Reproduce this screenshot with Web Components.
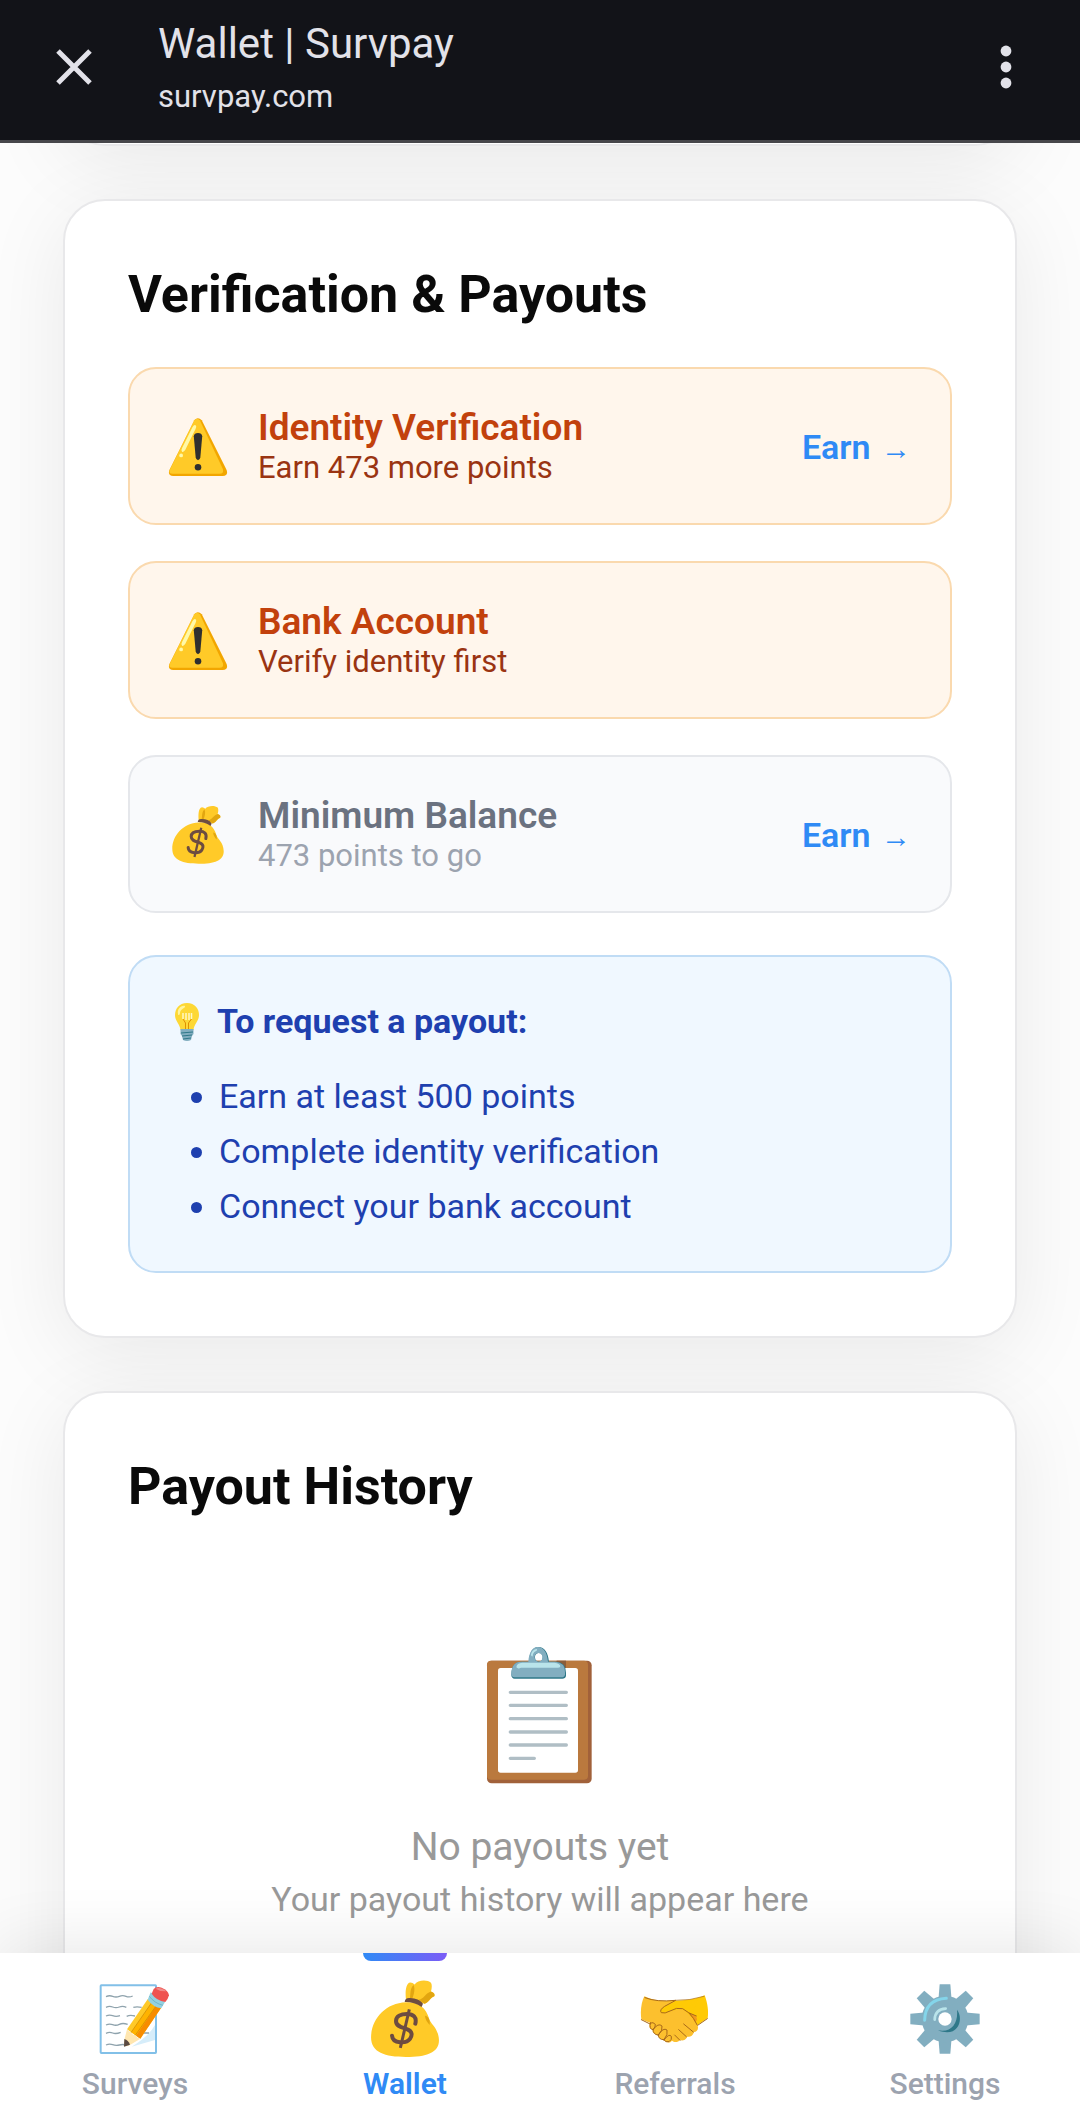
<!DOCTYPE html>
<html lang="en">
<head>
<meta charset="utf-8">
<meta name="viewport" content="width=device-width, initial-scale=1">
<title>Wallet | Survpay</title>
<style>
  body {
    margin: 0;
    background: #fcfcfc;
    color: #0a0a0a;
    font-family: Roboto, "Liberation Sans", sans-serif;
  }
</style>
</head>
<body>
<wallet-page></wallet-page>

<script>
/** Create an HTML template element from a string template. */
const html = (strings, ...expressions) => {
  const template = document.createElement('template')
  template.innerHTML = strings.reduce((result, str, i) => result + str + (expressions[i] ?? ''), '')
  return template
}

/** Base class: clones the static template into an open shadow root. */
class Component extends HTMLElement {
  constructor() {
    super()
    this.attachShadow({ mode: 'open' })
    this.shadowRoot.appendChild(this.constructor.template.content.cloneNode(true))
  }
}

const gearTooth = 'M236 163h32l4 50h-40z'

/** Drawings by name: viewBox, then markup. */
const icons = {
  close: ['0 0 36 36', `
    <path d="M2 2L34 34M34 2L2 34" stroke="currentColor" stroke-width="5"/>`],

  more: ['0 0 12 44', `
    <g fill="currentColor"><circle cx="6" cy="6" r="5.4"/><circle cx="6" cy="22" r="5.4"/><circle cx="6" cy="38" r="5.4"/></g>`],

  warning: ['0 0 128 128', `
    <path fill="#f2a600" d="M57 6Q64-1 72 7L125 113Q129 125 117 126H11Q-1 125 3 113Z"/>
    <path fill="#ffca28" d="M56 7Q62 0 68 7L117 111Q120 121 110 121H10Q0 121 4 112Z"/>
    <path fill="#fff9a8" d="M52 22Q57 14 60 19Q61 22 56 31L37 70Q33 76 30 74Q27 71 30 66Z"/>
    <circle cx="28" cy="82" r="4" fill="#fff9a8"/>
    <path fill="#2f2f2f" d="M55 41Q56 34 64 34Q72 34 73 41L69 86Q68 92 64 92Q60 92 59 86Z"/>
    <circle cx="64" cy="107" r="7" fill="#2f2f2f"/>`],

  money: ['106 148 238 238', `
    <path fill="#ffca28" d="M228 208C226 195 225 158 241 157Q248 157 254 163C262 150 292 148 303 158Q308 166 303 184Q317 189 313 199C300 205 298 217 284 221Z"/>
    <path fill="#e2a610" d="M240 204C242 190 240 174 251 165C256 178 252 192 247 206ZM266 209C284 205 284 190 303 184Q317 189 313 199C298 204 298 217 284 221Z"/>
    <path fill="#ffca28" d="M228 217C262 214 288 230 298 268C302 282 326 296 327 330C328 368 290 381 228 381C165 381 123 368 123 322C123 270 165 219 228 217Z"/>
    <path fill="#e2a610" d="M285 257C296 258 301 270 299 285C291 276 286 268 285 257Z"/>
    <path fill="#6d4c41" d="M224 216C225 207 230 203 240 204C258 205 270 209 279 221L275 231C260 220 240 215 224 216Z"/>
    <path fill="none" stroke="#6d4c41" stroke-width="12" stroke-linecap="round" d="M256 281C261 261 250 252 231 252C212 252 198 259 198 273C198 290 217 292 232 298C248 304 247 317 240 327C230 341 188 343 186 317"/>
    <path stroke="#6d4c41" stroke-width="9" d="M238 238L211 354"/>`],

  bulb: ['0 0 38 38', `
    <path fill="#fdd835" d="M19 0C11 0 7 6 7 12C7 18 12 21 12.500 27H25.500C26 21 31 18 31 12C31 6 27 0 19 0Z"/>
    <path fill="#fff59d" d="M10 11C9 6 13 2 17 3C18 5 12 6 12 10C12 12 10 13 10 11Z"/>
    <path fill="none" stroke="#fff8c4" stroke-width="1.500" d="M15 16V10M18 17V10M21 17V10M23.500 16V10"/>
    <path fill="none" stroke="#e09000" d="M15 16L17.500 20V27M23.500 16L20.500 20V27"/>
    <path fill="#82aec0" d="M12.500 26H25.500V31L24 33L23 37Q19 39 15 37L14 33L12.500 31Z"/>
    <path stroke="#2f7889" d="M13 30L25 29M14 33L24 32M15 36L23 35"/>`],

  clipboard: ['30 75 420 420', `
    <rect x="81" y="122" width="314" height="368" rx="14" fill="#a1613a"/>
    <rect x="81" y="122" width="303" height="357" rx="12" fill="#ba793e"/>
    <rect x="114" y="144" width="240" height="314" rx="8" fill="#fff"/>
    <path fill="#8b5d3b" d="M290 122H318V144H290Z"/>
    <path stroke="#b0bec5" stroke-width="10" stroke-linecap="round" d="M151 217H319M151 256H319M151 296H319M151 336H319M151 375H319M151 415H223"/>
    <path fill="#2f7889" fill-rule="evenodd" d="M207 125C208 97 218 82 235 81C254 81 264 98 267 125H290Q318 127 318 158V168Q316 176 307 176H164Q154 175 154 164C155 136 164 126 184 125ZM236 99a12 13 0 1 0 1 0Z"/>
    <path fill="#82aec0" fill-rule="evenodd" d="M205 125C207 97 217 81 233 81C251 81 261 98 264 125H286Q315 127 315 156V164Q313 172 304 172H163Q154 171 154 162C155 136 164 126 184 125ZM235 99a12 13 0 1 0 1 0Z"/>
    <path fill="#b9e4ea" d="M169 142Q170 129 187 128H283Q300 130 301 139Q299 145 289 143H183Q174 148 169 142ZM213 103Q217 88 230 87Q234 90 227 94Q218 98 218 109Q213 111 213 103Z"/>`],

  memo: ['117 159 216 216', `
    <rect x="122" y="166" width="166" height="203" rx="2" fill="#fff" stroke="#82c0e8" stroke-width="6"/>
    <path fill="#d6edfa" d="M285 285V330L215 350Q265 320 285 285Z"/>
    <path fill="none" stroke="#8fa3ad" stroke-width="4" d="M138 200q10-5 20-1t20 0t20 0t20-1M138 232q10-5 20-1t20 0t21 1M220 232q10-3 25 0M138 258q10-5 20-1t22 0M200 259q10-5 25-1M138 285q10-5 20-1t20-1t25 0M138 310q10-5 20-1t24-2M250 309h17M138 345q10-5 20-1t20 1t20 0"/>
    <path fill="#ffc928" d="M264 206L303 234L241 326L201 298Z"/>
    <path fill="#ffb300" d="M277 215L290 225L228 317L214 307Z"/>
    <path fill="#f78c00" d="M290 225L303 234L241 326L228 317Z"/>
    <path fill="none" stroke="#c98500" stroke-width="2" d="M277 215L212 309M290 225L225 317"/>
    <path fill="#ffe6b0" d="M201 298Q205 306 213 307Q217 316 227 316Q232 326 241 326L205 348L192 349L193 329Z"/>
    <path fill="#5a4a42" d="M193 327Q205 330 210 344L192 350Z"/>
    <path fill="#94d1e0" d="M272 187L315 216L304 235Q280 232 263 209Z"/>
    <path fill="none" stroke="#5fa9bd" stroke-width="2" d="M268 199Q284 220 309 226"/>
    <path fill="#ef5350" d="M281 177Q289 168 305 173Q325 181 327 196Q325 206 316 216Q289 212 275 191Z"/>
    <path fill="#f28b88" d="M287 176Q300 170 319 184Q300 185 287 176Z"/>`],

  handshake: ['147 159 216 216', `
    <path fill="#ffca05" d="M230 214C275 213 315 209 344 196C353 220 356 245 353 264L318 288L240 300Z"/>
    <path fill="#fcc02e" d="M163 199C190 213 220 214 259 211L232 234C250 252 262 230 282 240C300 255 312 270 321 283C328 295 322 306 312 306C308 318 300 322 292 320C286 332 276 333 270 330C264 338 252 338 246 332C238 342 226 336 222 330C212 330 204 322 204 316C194 312 186 308 188 299C178 297 175 287 181 279L154 268C150 240 155 215 163 199Z"/>
    <path fill="#f4991d" d="M282 238Q300 250 317 258Q326 270 315 276Q300 250 282 238Z"/>
    <path fill="#ffca05" d="M259 212L224 229Q207 240 214 248Q224 252 240 243Q260 231 278 235L306 252L322 212Z"/>
    <g fill="none" stroke="#a8691a" stroke-width="3" stroke-linecap="round" stroke-linejoin="round">
      <path d="M165 203Q200 217 257 211L224 229Q207 240 214 248Q224 252 240 243Q260 231 278 236Q294 250 319 258M298 250Q312 264 321 284M281 282L310 306M266 299L289 320M254 315L270 331"/>
      <path d="M257 211Q300 212 342 199" stroke-width="2"/>
      <path d="M181 279Q190 275 196 283Q197 291 189 299Q177 298 181 279ZM189 299Q205 277 216 288Q219 300 205 315Q189 314 189 299ZM205 315Q220 291 231 300Q235 313 222 329Q205 329 205 315ZM222 330Q237 309 244 319Q247 329 237 335Q227 338 222 330ZM154 269L180 282M352 266L323 286"/>
    </g>`],

  gear: ['144 159 216 216', `
    <g fill="#82aec0">
      ${[0, 45, 90, 135, 180, 225, 270, 315].map(a => `<path d="${gearTooth}" transform="rotate(${a} 252 267)"/>`).join('')}
      <circle cx="252" cy="267" r="70"/>
    </g>
    <path fill="none" stroke="#84d5ea" stroke-width="9" stroke-linecap="round" d="M191 271Q192 209 256 205"/>
    <path fill="none" stroke="#b9e4ea" stroke-width="8" stroke-linecap="round" d="M221 269Q222 238 254 236"/>
    <path fill="#2f7889" d="M288 239C309 266 293 326 231 301C273 309 292 278 288 239Z"/>
    <circle cx="252" cy="267" r="20" fill="#fff"/>`]
}

/** <app-icon name="gear"> fills the box that its user gives it. */
class AppIcon extends Component {
  static localName = 'app-icon'

  static observedAttributes = ['name']

  static template = html`
    <style>
      :host {
        display: block;
        flex: none;
      }
      svg {
        display: block;
        width: 100%;
        height: 100%;
      }
    </style>
    <svg xmlns="http://www.w3.org/2000/svg" aria-hidden="true"></svg>
  `

  attributeChangedCallback(attributeName, oldName, name) {
    const [viewBox, markup] = icons[name]
    const svg = this.shadowRoot.querySelector('svg')
    svg.setAttribute('viewBox', viewBox)
    svg.innerHTML = markup
  }
}

class BrowserBar extends Component {
  static localName = 'browser-bar'

  static template = html`
    <style>
      :host {
        display: flex;
        align-items: center;
        box-sizing: border-box;
        height: 143px;
        padding: 0 68px 6px 56px;
        border-bottom: 3px solid #47474b;
        background: #121318;
        color: #e2e2e9;
        position: relative;
        z-index: 1;
      }
      button {
        padding: 0;
        border: 0;
        background: none;
        color: inherit;
      }
      .close app-icon {
        width: 36px;
        height: 36px;
      }
      .more app-icon {
        width: 12px;
        height: 44px;
      }
      .titles {
        flex: 1;
        padding-left: 66px;
      }
      .title {
        font-size: 42px;
        line-height: 60px;
      }
      .host {
        font-size: 31px;
        line-height: 46px;
      }
    </style>
    <button class="close" aria-label="Close"><app-icon name="close"></app-icon></button>
    <div class="titles">
      <div class="title"><slot></slot></div>
      <div class="host"><slot name="host"></slot></div>
    </div>
    <button class="more" aria-label="More options"><app-icon name="more"></app-icon></button>
  `
}

class AppCard extends Component {
  static localName = 'app-card'

  static template = html`
    <style>
      :host {
        display: block;
        padding: 63px;
        border: 2px solid #e8e8ea;
        border-radius: 42px;
        background: #fff;
        box-shadow: 0 16px 84px rgba(0, 0, 0, .08);
      }
      ::slotted(h2) {
        margin: 0 0 41px;
        font-size: 52px;
        font-weight: 700;
        line-height: 62px;
      }
    </style>
    <slot name="title"></slot>
    <slot></slot>
  `
}

/** One requirement row. tone="warning" is orange, otherwise gray. */
class StatusItem extends Component {
  static localName = 'status-item'

  static template = html`
    <style>
      :host {
        display: flex;
        align-items: center;
        gap: 30px;
        padding: 38px 39px 36px 38px;
        border: 2px solid #e5e7eb;
        border-radius: 28px;
        background: #f9fafc;
        color: #9ca3af;
        --title: #6b7280;
      }
      :host([tone="warning"]) {
        border-color: #fad9ae;
        background: #fff6ec;
        color: #9a3412;
        --title: #c2410c;
      }
      app-icon {
        width: 60px;
        height: 60px;
      }
      .text {
        flex: 1;
      }
      .title {
        color: var(--title);
        font-size: 37px;
        font-weight: 600;
        line-height: 42px;
      }
      .detail {
        font-size: 31px;
        line-height: 38px;
      }
      ::slotted(a) {
        color: #2f8af5;
        font-size: 34px;
        font-weight: 600;
        text-decoration: none;
      }
    </style>
    <app-icon></app-icon>
    <div class="text">
      <div class="title"><slot name="title"></slot></div>
      <div class="detail"><slot></slot></div>
    </div>
    <slot name="action"></slot>
  `

  constructor() {
    super()
    this.shadowRoot.querySelector('app-icon').setAttribute('name', this.getAttribute('icon'))
  }
}

class PayoutTips extends Component {
  static localName = 'payout-tips'

  static template = html`
    <style>
      :host {
        display: block;
        padding: 37px 38px;
        border: 2px solid #c0dcf5;
        border-radius: 28px;
        background: #f0f8ff;
        color: #1e40af;
        font-size: 34px;
        line-height: 55px;
      }
      .heading {
        display: flex;
        align-items: center;
        gap: 11px;
        font-weight: 700;
      }
      app-icon {
        width: 38px;
        height: 38px;
      }
      ul {
        margin: 20px 0 0;
        padding-left: 51px;
      }
    </style>
    <div class="heading"><app-icon name="bulb"></app-icon><slot></slot></div>
    <ul>
      <li>Earn at least 500 points</li>
      <li>Complete identity verification</li>
      <li>Connect your bank account</li>
    </ul>
  `
}

class EmptyState extends Component {
  static localName = 'empty-state'

  static template = html`
    <style>
      :host {
        display: flex;
        flex-direction: column;
        align-items: center;
        gap: 6px;
        padding: 86px 0;
        color: #999;
        font-size: 34px;
        line-height: 46px;
      }
      app-icon {
        width: 140px;
        height: 140px;
        margin-bottom: 33px;
      }
      .title {
        font-size: 39px;
      }
    </style>
    <app-icon name="clipboard"></app-icon>
    <div class="title"><slot name="title"></slot></div>
    <slot></slot>
  `
}

class NavItem extends Component {
  static localName = 'nav-item'

  static template = html`
    <style>
      :host {
        display: block;
        color: #9ca3af;
      }
      :host([active]) {
        color: #2f8af5;
      }
      a {
        display: flex;
        flex-direction: column;
        align-items: center;
        gap: 12px;
        padding: 30px 0 23px;
        color: inherit;
        font-size: 30px;
        font-weight: 500;
        line-height: 34px;
        text-decoration: none;
        position: relative;
      }
      app-icon {
        width: 72px;
        height: 72px;
      }
      :host([active]) a {
        font-weight: 600;
      }
      :host([active]) app-icon {
        transform: scale(1.1);
      }
      /* marker that hangs from the top edge of the bar */
      :host([active]) a::before {
        content: "";
        position: absolute;
        top: 0;
        left: calc(50% - 42px);
        width: 84px;
        height: 8px;
        border-radius: 0 0 8px 8px;
        background: linear-gradient(90deg, #2f8af5, #7c5cf6);
      }
    </style>
    <a href="#"><app-icon></app-icon><slot></slot></a>
  `

  constructor() {
    super()
    this.shadowRoot.querySelector('app-icon').setAttribute('name', this.getAttribute('icon'))
  }
}

class BottomNav extends Component {
  static localName = 'bottom-nav'

  static template = html`
    <style>
      :host {
        display: block;
        background: #fff;
        box-shadow: 0 -10px 64px rgba(0, 0, 0, .09);
        position: relative;
        z-index: 1;
      }
      nav {
        display: grid;
        grid-template-columns: repeat(4, 1fr);
      }
    </style>
    <nav><slot></slot></nav>
  `
}

class WalletPage extends Component {
  static localName = 'wallet-page'

  static template = html`
    <style>
      :host {
        display: flex;
        flex-direction: column;
        height: 100vh;
      }
      main {
        flex: 1;
        display: flex;
        flex-direction: column;
        gap: 53px;
        min-height: 0;
        padding: 0 63px;
        overflow: hidden;
      }
      app-card {
        flex: none;
      }
      /* the card above is scrolled away except for its lower edge */
      .scrolled {
        margin-top: -127px;
      }
      .items {
        display: flex;
        flex-direction: column;
        gap: 36px;
        margin-bottom: 42px;
      }
      .arrow {
        margin-left: 2px;
        font-family: "Liberation Sans", sans-serif;
        font-size: 30px;
        font-weight: 400;
      }
    </style>
    <browser-bar>Wallet | Survpay<span slot="host">survpay.com</span></browser-bar>
    <main>
      <app-card class="scrolled"></app-card>
      <app-card>
        <h2 slot="title">Verification &amp; Payouts</h2>
        <div class="items">
          <status-item tone="warning" icon="warning">
            <span slot="title">Identity Verification</span>Earn 473 more points
            <a slot="action" href="#">Earn <span class="arrow">→</span></a>
          </status-item>
          <status-item tone="warning" icon="warning">
            <span slot="title">Bank Account</span>Verify identity first
          </status-item>
          <status-item icon="money">
            <span slot="title">Minimum Balance</span>473 points to go
            <a slot="action" href="#">Earn <span class="arrow">→</span></a>
          </status-item>
        </div>
        <payout-tips>To request a payout:</payout-tips>
      </app-card>
      <app-card>
        <h2 slot="title">Payout History</h2>
        <empty-state>
          <span slot="title">No payouts yet</span>Your payout history will appear here
        </empty-state>
      </app-card>
    </main>
    <bottom-nav>
      <nav-item icon="memo">Surveys</nav-item>
      <nav-item icon="money" active>Wallet</nav-item>
      <nav-item icon="handshake">Referrals</nav-item>
      <nav-item icon="gear">Settings</nav-item>
    </bottom-nav>
  `
}

for (const component of [AppIcon, BrowserBar, AppCard, StatusItem, PayoutTips, EmptyState, NavItem, BottomNav, WalletPage]) {
  customElements.define(component.localName, component)
}
</script>
</body>
</html>
